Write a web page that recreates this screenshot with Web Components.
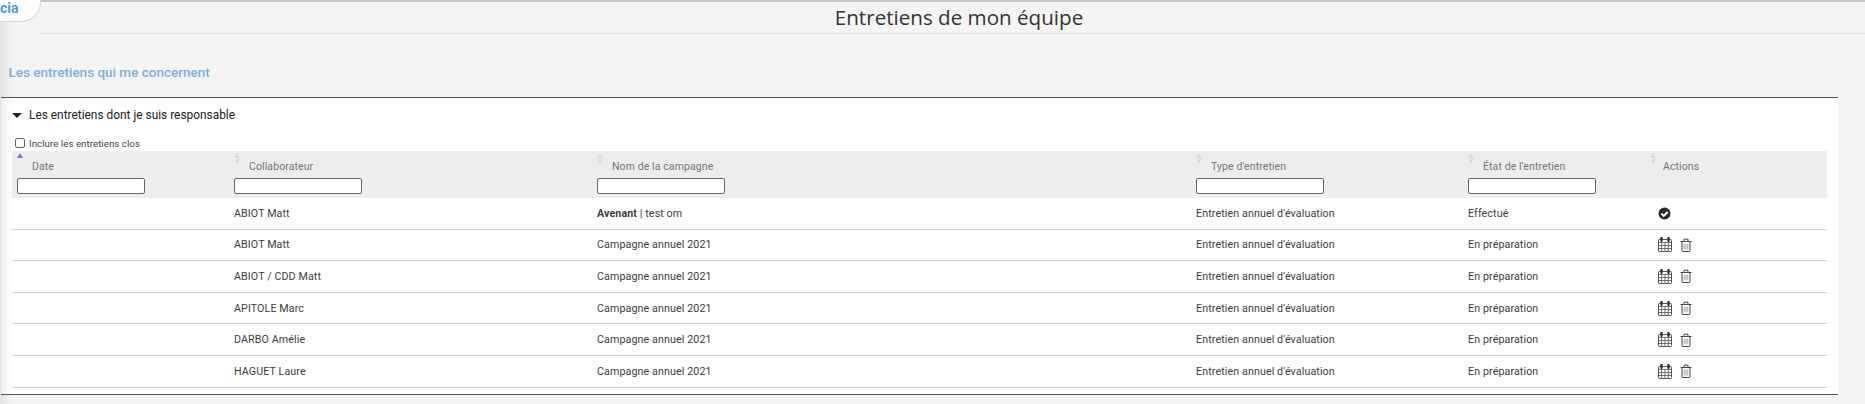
<!DOCTYPE html>
<html lang="fr">
<head>
<meta charset="utf-8">
<title>Entretiens de mon équipe</title>
<style>
  html, body { margin: 0; height: 404px; overflow: hidden; background: #f4f4f4; font-family: Roboto, "Liberation Sans", sans-serif; }
</style>
</head>
<body>
<team-page>
  <page-title slot="title">Entretiens de mon équipe</page-title>
  <team-panel heading="Les entretiens dont je suis responsable" check="Inclure les entretiens clos">
    <team-head></team-head>
    <team-row name="ABIOT Matt" state="Effectué" done><b>Avenant</b> | test om</team-row>
    <team-row name="ABIOT Matt" state="En préparation">Campagne annuel 2021</team-row>
    <team-row name="ABIOT / CDD Matt" state="En préparation">Campagne annuel 2021</team-row>
    <team-row name="APITOLE Marc" state="En préparation">Campagne annuel 2021</team-row>
    <team-row name="DARBO Amélie" state="En préparation">Campagne annuel 2021</team-row>
    <team-row name="HAGUET Laure" state="En préparation">Campagne annuel 2021</team-row>
  </team-panel>
</team-page>

<script>
// same column widths for the header and every row
const COLS = '217px 363px 599px 272px 182px 181px';

const ICONS = {
  check: `<svg width="13" height="13" viewBox="0 0 13 13"><circle cx="6.5" cy="6.5" r="6" fill="#2b2b2b"/><path d="M3.4 6.7l2.3 2.3 4-4" fill="none" stroke="#fff" stroke-width="1.9"/></svg>`,
  calendar: `<svg width="14" height="15" viewBox="0 0 14 15" fill="none" stroke="#555" stroke-width="1"><rect x=".5" y="2.5" width="13" height="12" rx=".8"/><path d="M.5 5.5h13M.5 8.5h13M.5 11.5h13M3.7 5.5v9M7 5.5v9M10.3 5.5v9" stroke-width=".8"/><path d="M3.5 .8v3M10.5 .8v3" stroke="#333" stroke-width="2.4" stroke-linecap="round"/></svg>`,
  trash: `<svg width="12" height="14" viewBox="0 0 12 14" fill="none" stroke="#444"><path d="M.5 3.5h11M4 3.5V1.2h4v2.3M2 3.5v9.2c0 .5.3.8.8.8h6.4c.5 0 .8-.3.8-.8V3.5"/><path d="M4.2 5.5v6M6 5.5v6M7.8 5.5v6" stroke="#999" stroke-width=".9"/></svg>`
};

class TeamPage extends HTMLElement {
  constructor() {
    super();
    this.attachShadow({ mode: 'open' }).innerHTML = `
    <style>
      :host { display: block; position: relative; height: 404px; background: #f4f4f4; border-top: 2px solid #c6c6c6; box-sizing: border-box; }
      .tab { position: absolute; left: 0; top: -2px; width: 41px; height: 22px; box-sizing: border-box; background: #fff; border: 1px solid #d8d8d8; border-left: 0; border-top: 0; border-radius: 0 0 20px 0; overflow: hidden; z-index: 3; }
      .tab span { position: absolute; left: 0; top: 0; font: bold 14px/17px Roboto, sans-serif; color: #4a9be8; }
      .shade { position: absolute; left: 0; top: 18px; bottom: 0; width: 13px; background: linear-gradient(to right, rgba(0,0,0,.07), rgba(0,0,0,0)); pointer-events: none; z-index: 2; }
      header { margin-left: 40px; height: 31px; border-bottom: 1px solid #e2e2e2; padding-left: 13px; display: flex; justify-content: center; align-items: center; }
      h2 { margin: 0; padding: 28px 0 0 8.5px; height: 24px; font: 500 13.5px/20px Roboto, sans-serif; color: #7eb0dc; }
      .body { padding-left: 1px; padding-right: 27px; padding-top: 12px; position: relative; z-index: 1; }
    </style>
    <div class="tab"><span>cia</span></div>
    <div class="shade"></div>
    <header><slot name="title"></slot></header>
    <h2>Les entretiens qui me concernent</h2>
    <div class="body"><slot></slot></div>`;
  }
}

class PageTitle extends HTMLElement {
  constructor() {
    super();
    this.attachShadow({ mode: 'open' }).innerHTML = `
    <style>:host { display: block; font: 20.6px/31px "Open Sans", sans-serif; color: #333; }</style><slot></slot>`;
  }
}

class TeamPanel extends HTMLElement {
  constructor() {
    super();
    this.attachShadow({ mode: 'open' }).innerHTML = `
    <style>
      :host { display: block; background: #fff; border-top: 1px solid #555; border-bottom: 1px solid #555; padding: 0 11px 8px 11px; height: 298px; box-sizing: border-box; margin-top: -1px; }
      .toggle { display: flex; align-items: center; height: 34px; font: 11.9px/16px Roboto, sans-serif; color: #222; }
      .toggle i { width: 0; height: 0; border: 5px solid transparent; border-top: 5px solid #222; border-bottom: 0; margin-right: 7px; }
      .check { display: flex; align-items: center; box-sizing: border-box; height: 18px; padding-top: 3px; margin-top: 1px; font: 9.8px/14px Roboto, sans-serif; color: #444; }
      .check input { appearance: none; width: 10px; height: 10px; margin: -1px 4px 0 3px; border: 1px solid #666; border-radius: 2px; background: #fff; }
    </style>
    <div class="toggle"><i></i><span></span></div>
    <label class="check"><input type="checkbox"><span></span></label>
    <slot></slot>`;
    const spans = this.shadowRoot.querySelectorAll('span');
    spans[0].textContent = this.getAttribute('heading');
    spans[1].textContent = this.getAttribute('check');
  }
}

class SortHandle extends HTMLElement {
  constructor() {
    super();
    this.attachShadow({ mode: 'open' }).innerHTML = `
    <style>
      :host { display: block; position: absolute; left: 3px; top: 2px; }
      i { display: block; width: 0; height: 0; border: 3px solid transparent; }
      .up { border-top: 0; border-bottom: 5px solid #dcdcdc; margin-bottom: 1px; }
      .down { border-bottom: 0; border-top: 5px solid #dcdcdc; }
      :host([active]) .up { border-bottom-color: #7c7cc8; }
      :host([active]) .down { border-top-color: transparent; }
    </style>
    <i class="up"></i><i class="down"></i>`;
  }
}

class TeamHead extends HTMLElement {
  constructor() {
    super();
    const labels = ['Date', 'Collaborateur', 'Nom de la campagne', "Type d'entretien", "État de l'entretien", 'Actions'];
    const cell = (label, i) => `
      <div class="cell">
        <sort-handle ${i === 0 ? 'active' : ''}></sort-handle>
        <span>${label}</span>
        ${i < 5 ? '<input type="text">' : ''}
      </div>`;
    this.attachShadow({ mode: 'open' }).innerHTML = `
    <style>
      :host { display: grid; grid-template-columns: ${COLS}; height: 47px; background: #ededed; }
      .cell { position: relative; padding: 9px 0 0 4px; font: 10.5px/14px Roboto, sans-serif; color: #777; letter-spacing: .1px; }
      .cell span { display: block; padding-left: 13px; height: 18px; }
      .cell:nth-child(n+2) { padding-left: 5px; }
      .cell:nth-child(n+2) span { padding-left: 15px; }
      .cell:nth-child(n+2) sort-handle { left: 5px; }
      .cell:last-child span { padding-left: 13px; }
      input { display: block; width: 128px; height: 16px; box-sizing: border-box; border: 1px solid #666; border-radius: 2px; background: #fff; margin: 0; padding: 0; }
    </style>
    ${labels.map(cell).join('')}`;
  }
}

class TeamRow extends HTMLElement {
  constructor() {
    super();
    const actions = this.hasAttribute('done')
      ? ICONS.check
      : `${ICONS.calendar}${ICONS.trash}`;
    this.attachShadow({ mode: 'open' }).innerHTML = `
    <style>
      :host { display: grid; grid-template-columns: ${COLS}; height: 31.6px; box-sizing: border-box; border-bottom: 1px solid #d4d4d4; align-items: center; font: 10.7px/14px Roboto, sans-serif; color: #3d3d3d; letter-spacing: .1px; }
      .cell { padding: 1px 0 0 5px; }
      .actions { display: flex; align-items: center; gap: 8px; padding-left: 13px; }
      svg { display: block; }
    </style>
    <div></div>
    <div class="cell name"></div>
    <div class="cell"><slot></slot></div>
    <div class="cell">Entretien annuel d'évaluation</div>
    <div class="cell state"></div>
    <div class="actions">${actions}</div>`;
    this.shadowRoot.querySelector('.name').textContent = this.getAttribute('name');
    this.shadowRoot.querySelector('.state').textContent = this.getAttribute('state');
  }
}

customElements.define('team-page', TeamPage);
customElements.define('page-title', PageTitle);
customElements.define('team-panel', TeamPanel);
customElements.define('sort-handle', SortHandle);
customElements.define('team-head', TeamHead);
customElements.define('team-row', TeamRow);
</script>
</body>
</html>
